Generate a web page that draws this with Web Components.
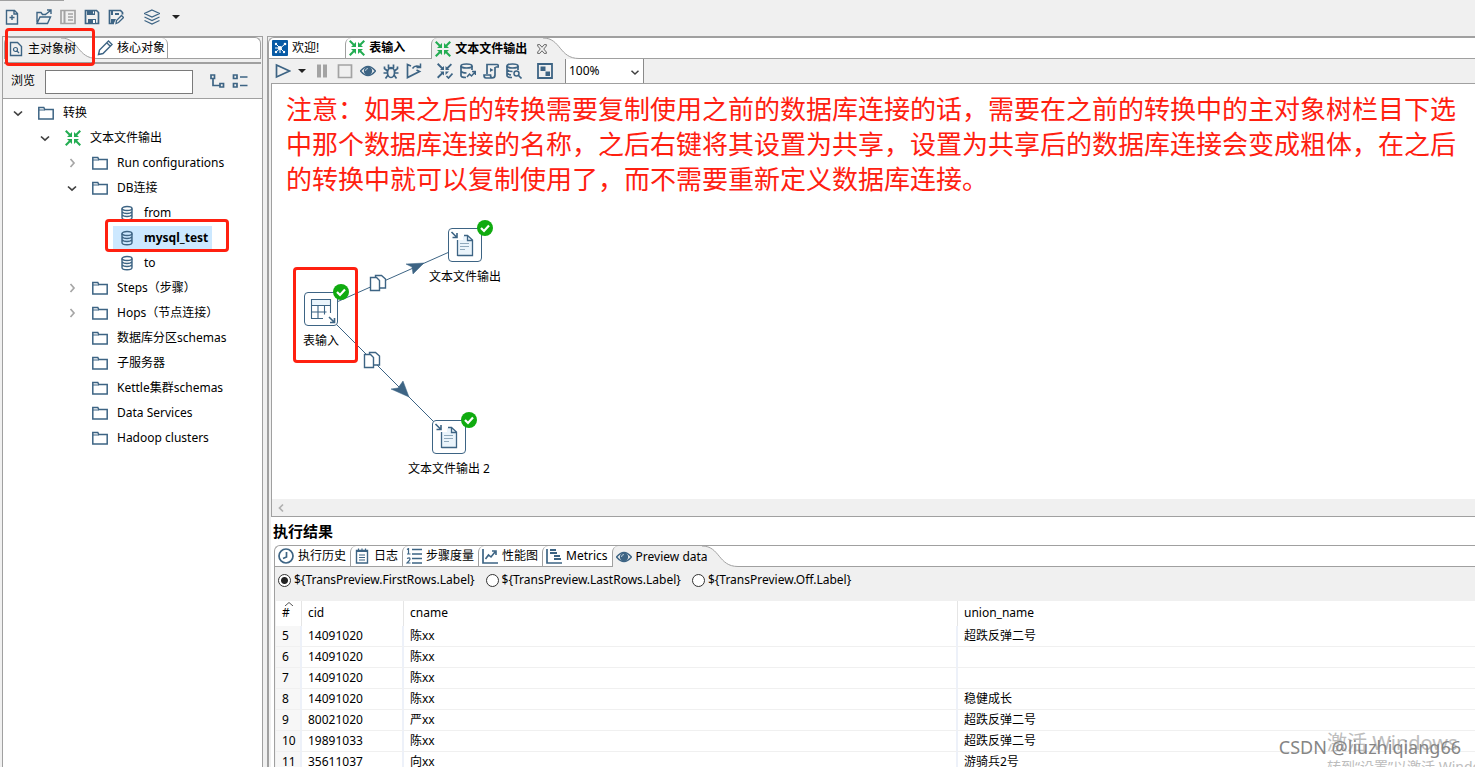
<!DOCTYPE html>
<html lang="zh-CN">
<head>
<meta charset="utf-8">
<title>Spoon - 文本文件输出</title>
<style>
  html, body { margin: 0; height: 100%; overflow: hidden; }
  body {
    --ink: #3d6484; --line: #a0a0a0; --face: #f0f0f0; --mark: #ff2010;
    font: 12px/16px "Noto Sans", "Noto Sans CJK SC", sans-serif;
    color: #000; background: var(--face);
  }
</style>
</head>
<body>
<spoon-app></spoon-app>

<script>
const ICONS = {
  "new": '<path d="M2.500 1.500h8l3 3v10.500h-11z M10 1.500v3.500h3.500" stroke-width="1.400"/><path d="M8 6v5M5.500 8.500h5" stroke-width="1.400"/>',
  open: '<path d="M1 13.500V3.500h4l1.500 2H10M1 14.500l3-6.500h10.500l-3 6.500z" stroke-width="1.400"/><path d="M9.500 5.500l5-4M11 1h4v4" stroke-width="1.400"/>',
  explore: '<g stroke="#a3a3a3"><path d="M1 1.500h14v13H1z"/><path d="M4.500 2v12" stroke-width="2"/><path d="M8 5h5M8 8h5M8 11h5"/></g>',
  save: '<path d="M1.500 1.500h11l2 2v11h-13z"/><path d="M3 2h8v4H3z" fill="currentColor" stroke="none"/><path d="M4 15v-5h8v5z" fill="currentColor" stroke="none"/><path d="M9 11h2v3H9zM9 2.500h1v2H9z" fill="#fff" stroke="none"/>',
  saveas: '<path d="M6 14.500H1.500v-13h11l2 2v2"/><path d="M3 2h2v4H3zM7 4h4v2H7zM3 14v-4h5l-2 4z" fill="currentColor" stroke="none"/><path d="M8 14.500l.5-3 5-5 2 2-5 5z" fill="#f0f0f0" stroke-width="1.300"/>',
  layers: '<path d="M8 1l7.500 3.500L8 8 .5 4.500zM.5 8L8 11.500 15.500 8M.5 11.500L8 15l7.500-3.500" stroke-width="1.200"/>',
  caret: '<path d="M4 6h8l-4 4z" fill="#222" stroke="none"/>',
  docfind: '<path d="M2.500 1.500h7l4 4v9h-11z" stroke-width="1.400"/><circle cx="7.500" cy="8.500" r="2" stroke-width="1.200"/><path d="M9 10l2 2" stroke-width="1.300"/>',
  pencil: '<path d="M1.500 14.500l1-4.500 9-9 3.500 3.500-9 9zM10 3l3 3" stroke-width="1.400"/>',
  hop: '<g fill="#23ad52" stroke="none"><path d="M7 2v5H2l1.800-1.800L0 1.500 1.500 0l3.700 3.700z"/><path d="M9 2v5h5l-1.800-1.800L16 1.500 14.500 0l-3.700 3.700z"/><path d="M7 14V9H2l1.800 1.800L0 14.500 1.500 16l3.700-3.700z"/><path d="M9 14V9h5l-1.800 1.800 3.800 3.700-1.500 1.500-3.700-3.700z"/></g>',
  welcome: '<rect width="16" height="16" rx="1" fill="#075aa5" stroke="none"/><g stroke="#fff" stroke-width="1"><path d="M4 4l8 8M13 4L4 12M8 8V13M3 8h5"/></g><g fill="#fff" stroke="none"><circle cx="8" cy="8" r="2"/><circle cx="13" cy="4" r="1.300"/><circle cx="4" cy="4" r="1.200"/><circle cx="4" cy="12" r="1.200"/><circle cx="12" cy="12" r="1.200"/></g>',
  close: '<path d="M3 3h2.500L8 6l2.500-3H13v1.500L10 8l3 3.500V13h-2.500L8 10l-2.500 3H3v-1.500L6 8 3 4.500z" stroke="#555" stroke-width="1"/>',
  play: '<path d="M1.500 2l13 6-13 6z"/>',
  pause: '<path d="M3 1.500h4v13H3zM9 1.500h4v13H9z" fill="#a3a3a3" stroke="none"/>',
  stop: '<path d="M1.500 2h13v12.500h-13z" stroke="#a3a3a3"/>',
  eye: '<path d="M.5 8Q8-1 15.500 8 8 17 .5 8z" stroke-width="1.500"/><circle cx="8" cy="8" r="4.200" fill="currentColor" stroke="none"/><path d="M8 5.500A2.500 2.500 0 0 0 5.500 8" stroke="#b9cbd8" stroke-width="1"/>',
  bug: '<ellipse cx="8" cy="9.500" rx="3.500" ry="5"/><path d="M5.500 5V1.500M10.500 5V1.500M5 5.500h6M4.500 8L1.500 5.500V3.500M11.500 8l3-2.500V3.500M4.500 10H.5M11.500 10h4M5 12l-2.500 3.500M11 12l2.500 3.500"/>',
  replay: '<path d="M5 3L1.500 1.500v13l12-6-3-1.500"/><path d="M6.500 5.500q2.500-4 8-1.500M14.500.5v4h-4" stroke-width="1.500"/>',
  verify: '<g fill="currentColor" stroke="none"><path d="M7 3v4H3l1.300-1.300L0 1.500 1.300 0l4.200 4.200z"/><path d="M8.500 3v4h4l-1.300-1.300 3.800-4L13.800.5 9.900 4.200z"/><path d="M7 12.500v-4H3l1.300 1.300L0 14l1.300 1.500 4.200-4.200z"/><path d="M8.500 12V8.500h3.500z"/></g><path d="M9.500 13l2 2 4-4.500"/>',
  dbrun: '<ellipse cx="6.500" cy="3" rx="5.500" ry="2"/><path d="M1 3v9.500q0 2 5 2M12 3v4M1 8q1 2 5.500 2"/><path d="M7 14l2.500-3 2 2 3.500-4M12 8.500h3.500V12" stroke-width="1.500"/>',
  script: '<path d="M4 11V1.500h10q1.500 0 1.500 2.500h-3M12 4v8q0 3-3 3H3q-2 0-2-3h6.500q0 3 2 3"/><path d="M7 5l3.500 2L7 9z" fill="currentColor" stroke="none"/>',
  dbfind: '<ellipse cx="6.500" cy="3" rx="5.500" ry="2"/><path d="M1 3v9.500q0 2 5 2M12 3v4M1 6.500q1 2 5.500 2M1 10q1 1.500 4 2"/><circle cx="10.500" cy="10.500" r="2.500" stroke-width="1.500"/><path d="M12.500 12.500l3 3"/>',
  results: '<path d="M1 1h14v14H1z" stroke-width="1.800"/><path d="M3.500 3.500h5v4.500h-5zM8.500 8.500h4.500v4.500H8.500z" fill="currentColor" stroke="none"/>',
  expand: '<path d="M2 2h3.500v3.500H2zM11 10.500h3.500V14H11zM4 6v6.500h7"/>',
  collapse: '<path d="M1.500 2H5v3.500H1.500zM1.500 10.500H5V14H1.500z"/><path d="M8 4h7.500M8 12.500h7.500"/>',
  folder: '<path d="M.8 14V2.500h5l1 2h8.400V14z" stroke-width="1.500"/><path d="M1 5h6" stroke-width="1"/>',
  db: '<g stroke-width="1.400"><ellipse cx="8" cy="3.500" rx="5" ry="2"/><path d="M3 3.500v9q0 2.300 5 2.300t5-2.300v-9M3 6.500q1 2 5 2t5-2M3 9.500q1 2 5 2t5-2"/></g>',
  down: '<path d="M4 6.500l4 3.700 4-3.700" stroke="#404040"/>',
  right: '<path d="M6.500 4l3.500 4-3.500 4" stroke="#a6a6a6"/>',
  left: '<path d="M10 4.500L6.500 8l3.500 3.500" stroke="#b0b0b0"/>',
  clock: '<circle cx="8" cy="8" r="7"/><path d="M8.500 4v5L5 10.500"/>',
  log: '<path d="M2.500 2.500h11v12.500h-11z" stroke-width="1.400"/><path d="M2 2h12v2H2z" fill="currentColor" stroke="none"/><path d="M4.500.5v3M8 .5v3M11.500.5v3M5 7h6M5 9.500h6M5 12h6" stroke-width="1.200"/>',
  steps: '<path d="M6 1.500h10M6 6h10M6 10.500h10M6 15h10" stroke-width="1.300"/><path d="M1 1.500l1.500-1v5M1 6h3.500M1 10.500q3-1.500 3 .5 0 1-3 4h3.500" stroke-width="1.200"/>',
  perf: '<path d="M1 1v14h15"/><path d="M3.500 11l3-4 2.500 2 4-5M10 3h4v4" stroke-width="1.600"/>',
  metrics: '<path d="M1 1v14h15"/><path d="M4 2h6M4 5h7M8 8h6M8 11h7" stroke-width="2"/>',
};
const svg = (name, size = 16) =>
  `<svg width="${size}" height="${size}" viewBox="0 0 16 16" fill="none" stroke="currentColor" stroke-width="1.700" aria-hidden="true">${ICONS[name] || ""}</svg>`;

class Base extends HTMLElement {
  connectedCallback() {
    if (this.shadowRoot) return;
    const t = document.createElement("template");
    t.innerHTML = this.render();
    this.attachShadow({ mode: "open" }).append(t.content.cloneNode(true));
  }
  attr(name, fallback = "") { return this.getAttribute(name) ?? fallback; }
}
const define = (name, render) =>
  customElements.define(name, class extends Base { render() { return render(this); } });

define("ui-icon", el => `
  <style>:host{display:block;flex:none;color:var(--ink);width:${el.attr("size", "16")}px;height:${el.attr("size", "16")}px}svg{display:block}</style>
  ${svg(el.attr("name"), el.attr("size", "16"))}`);

define("tool-button", el => `
  <style>
    :host{display:block;flex:none}
    button{display:flex;align-items:center;justify-content:center;width:23px;height:24px;padding:0;border:0;background:none}
    :host([narrow]) button{width:16px}
    :host([wide]) button{width:24px}
  </style>
  <button type="button" aria-label="${el.attr("label")}"><ui-icon name="${el.attr("icon")}"></ui-icon></button>`);

define("tool-bar", () => `
  <style>
    :host{display:flex;align-items:center;flex:none}
    ::slotted(.gap){width:8px;flex:none}
    ::slotted(.gap.big){width:12px}
  </style><slot></slot>`);

/* A red frame that is drawn over part of its parent */
define("red-frame", () => `
  <style>:host{display:block;position:absolute;z-index:5;box-sizing:border-box;border:3px solid var(--mark);border-radius:4px;pointer-events:none}</style>`);

define("tab-strip", () => `
  <style>
    :host{display:flex;flex:none;height:22px;box-sizing:border-box;border:1px solid var(--line);border-width:1px 0 0 1px;border-radius:6px 0 0 0;overflow:hidden;background:#fff}
    :host([closed]){border-right-width:1px;border-top-right-radius:6px}
    .rest{flex:1;border-bottom:1px solid var(--line)}
  </style><slot></slot><div class="rest"></div>`);

define("tab-item", el => `
  <style>
    :host{display:block;flex:none;position:relative}
    button{font:inherit;color:inherit;display:flex;align-items:center;gap:4px;height:100%;box-sizing:border-box;padding:0 4px 0 3px;border:0;border-bottom:1px solid var(--line);background:none;white-space:nowrap}
    ui-icon,.text,.x{position:relative;z-index:1}
    .x{width:14px;height:14px;margin-left:4px}
    :host([bold]) .text{font-weight:bold}
    :host([divided]) button{border-left:1px solid var(--line);border-top-left-radius:6px}
    :host([ended]) button{border-right:1px solid var(--line);border-top-right-radius:6px;padding:0 2px 0 0}
    :host([active]) button{border:0;padding-right:30px}
    :host([active][divided]) button{padding-left:4px}
    :host([active][tight]) button{padding-right:21px}
    .face{position:absolute;inset:0 36px 0 0;background:var(--face)}
    :host([active][divided]) .face{border-left:1px solid var(--line);border-top-left-radius:6px}
    .curve{position:absolute;right:0;top:0;width:36px;height:100%}
  </style>
  <button type="button" role="tab" aria-selected="${el.hasAttribute("active")}">
    ${el.hasAttribute("active") ? `<span class="face"></span><svg class="curve" viewBox="0 0 36 21" preserveAspectRatio="none"><path d="M0 0C18 0 16 20.500 36 20.500V21H0z" fill="#f0f0f0"/><path d="M0 0C18 0 16 20.500 36 20.500" fill="none" stroke="#a0a0a0"/></svg>` : ""}
    <ui-icon name="${el.attr("icon")}"></ui-icon>
    <span class="text"><slot></slot></span>
    ${el.hasAttribute("closable") ? `<span class="x">${el.hasAttribute("active") ? svg("close", 14) : ""}</span>` : ""}
  </button>`);

define("tree-node", el => `
  <style>
    :host{display:block}
    .row{position:relative;display:flex;align-items:center;height:25px;white-space:nowrap}
    .arrow{margin:0 12px 0 7px}
    .label{display:flex;align-items:center;gap:9px}
    :host([selected]) .label{font-weight:bold;background:#cce8ff;height:24px;margin-left:-6px;padding:0 4px 0 6px}
    .kids{padding-left:27px}
    red-frame{left:21px;top:-6px;width:124px;height:33px}
  </style>
  <div role="treeitem" aria-label="${el.attr("label")}">
    <div class="row">
      <ui-icon class="arrow" name="${el.attr("arrow")}"></ui-icon>
      <span class="label"><ui-icon name="${el.attr("icon", "folder")}"></ui-icon><span>${el.attr("label")}</span></span>
      ${el.hasAttribute("selected") ? "<red-frame></red-frame>" : ""}
    </div>
    <div class="kids" role="group"><slot></slot></div>
  </div>`);

define("object-panel", () => `
  <style>
    :host{display:flex;flex-direction:column;position:relative;box-sizing:border-box;border:1px solid var(--line);border-bottom:0;min-width:0}
    tab-strip{margin:0 1px}
    .band{height:3px;margin:0 1px;border-bottom:2px solid var(--line);flex:none}
    .search{display:flex;align-items:center;height:34px;padding:0 11px 0 8px;border-bottom:1px solid var(--line);flex:none}
    label{margin-right:10px}
    input{width:148px;height:24px;box-sizing:border-box;border:1px solid #7a7a7a;background:#fff;font:inherit;padding:0 4px;margin:2px auto 0 0}
    nav{flex:1;background:#fff;padding-top:1px;overflow:hidden}
    .frame{left:2px;top:-9px;width:90px;height:38px}
  </style>
  <tab-strip closed role="tablist">
    <tab-item icon="docfind" active tight>主对象树</tab-item>
    <tab-item icon="pencil" ended>核心对象</tab-item>
  </tab-strip>
  <div class="band"></div>
  <div class="search">
    <label for="q">浏览</label><input id="q" type="text">
    <tool-button icon="expand" label="展开"></tool-button><tool-button icon="collapse" label="折叠"></tool-button>
  </div>
  <nav role="tree">
    <tree-node arrow="down" label="转换">
      <tree-node arrow="down" icon="hop" label="文本文件输出">
        <tree-node arrow="right" label="Run configurations"></tree-node>
        <tree-node arrow="down" label="DB连接">
          <tree-node icon="db" label="from"></tree-node>
          <tree-node icon="db" label="mysql_test" selected></tree-node>
          <tree-node icon="db" label="to"></tree-node>
        </tree-node>
        <tree-node arrow="right" label="Steps（步骤）"></tree-node>
        <tree-node arrow="right" label="Hops（节点连接）"></tree-node>
        <tree-node label="数据库分区schemas"></tree-node>
        <tree-node label="子服务器"></tree-node>
        <tree-node label="Kettle集群schemas"></tree-node>
        <tree-node label="Data Services"></tree-node>
        <tree-node label="Hadoop clusters"></tree-node>
      </tree-node>
    </tree-node>
  </nav>
  <red-frame class="frame"></red-frame>`);

/* A step on the canvas; x and y are the top left corner of its box */
define("flow-step", el => `
  <style>
    :host{position:absolute;left:${el.attr("x")}px;top:${el.attr("y")}px;width:34px;display:flex;flex-direction:column;align-items:center;gap:7px;white-space:nowrap}
    svg{display:block;overflow:visible}
  </style>
  <svg width="34" height="34" viewBox="0 0 34 34" fill="none" stroke="#3d6484" aria-hidden="true">
    <rect x=".5" y=".5" width="33" height="33" rx="3.500" fill="#fff"/>
    ${el.attr("kind") === "input"
      ? `<path d="M8 8h18v5H8z" fill="#eaf4fb" stroke="none"/><path d="M26.500 21V7.500h-19v19H19M7.500 13.500h19M7.500 20h15M14 13.500v13M20.500 13.500v9" stroke-width="1.100"/>
         <path d="M25 25l5 5M30.500 26v4.500H26" stroke-width="1.600"/>`
      : `<path d="M10 12h5V8h5l4 4v15H10z" fill="#eaf4fb" stroke="none"/><path d="M9.500 27.500h15V12l-5-4.500H16M19.500 8v4.500h5M9.500 28V12" stroke-width="1.300"/><path d="M12 15.500h9M12 18.500h9M12 21.500h5" stroke="#8fa9bc"/>
         <path d="M3.500 4l5 5M9 5v4.500H4.500" stroke-width="1.600"/>`}
    <circle cx="37" cy="0" r="8" fill="#10ab10" stroke="none"/><path d="M33 0l3 3 5-5.500" stroke="#fff" stroke-width="2.200"/>
  </svg>
  <span><slot></slot></span>`);

define("flow-canvas", () => `
  <style>
    :host{display:flex;flex-direction:column;flex:none;box-sizing:border-box;height:434px;border:1px solid var(--line);border-right:0;background:#fff}
    .sheet{position:relative;flex:1;overflow:hidden}
    p{margin:0;padding:8px 14px;font-size:26px;line-height:35px;color:var(--mark);white-space:nowrap}
    .hops{position:absolute;left:0;top:0}
    .frame{left:21px;top:183px;width:65px;height:96px}
    .scroll{height:17px;background:var(--face);display:flex;align-items:center;padding-left:1px;flex:none}
  </style>
  <div class="sheet">
    <p>注意：如果之后的转换需要复制使用之前的数据库连接的话，需要在之前的转换中的主对象树栏目下选<br>中那个数据库连接的名称，之后右键将其设置为共享，设置为共享后的数据库连接会变成粗体，在之后<br>的转换中就可以复制使用了，而不需要重新定义数据库连接。</p>
    <svg class="hops" width="260" height="410" fill="none" stroke="#3d6484" aria-hidden="true">
      <path d="M49 225L193 161M49 225L177 353"/>
      <path d="M152 179l-18 1 6 3 1 7zM137 313l-6-16-5 7-7 1z" fill="#3d6484" stroke-width=".5"/>
      <g fill="#fff" stroke-width="1.400"><path d="M103.500 191.500h6l4 3.500v9h-10z"/><path d="M98.500 193.500h6l3 3v10h-9z"/>
      <path d="M97.500 268.500h6l4 3.500v9h-10z"/><path d="M92.500 270.500h6l3 3v10h-9z"/></g>
    </svg>
    <flow-step kind="input" x="32" y="208">表输入</flow-step>
    <flow-step kind="output" x="176" y="144">文本文件输出</flow-step>
    <flow-step kind="output" x="160" y="336">文本文件输出 2</flow-step>
    <red-frame class="frame"></red-frame>
  </div>
  <div class="scroll"><ui-icon name="left"></ui-icon></div>`);

define("zoom-select", () => `
  <style>
    :host{display:block;position:relative;width:79px;height:24px;margin-left:9px}
    select{appearance:none;width:100%;height:100%;box-sizing:border-box;margin:0;border:1px solid #8a8a8a;border-width:0 1px;border-radius:0;background:#fff;font:inherit;color:#000;padding:0 3px}
    ui-icon{position:absolute;right:2px;top:6px;pointer-events:none}
  </style>
  <select aria-label="缩放"><option>100%</option><option>75%</option><option>50%</option></select>
  <ui-icon name="down" size="14"></ui-icon>`);

define("radio-choice", el => `
  <style>
    :host{display:block}
    label{display:flex;align-items:center;gap:3px}
    input{appearance:none;margin:0;width:13px;height:13px;box-sizing:border-box;border:1px solid #333;border-radius:50%;background:#fff}
    input:checked{background:radial-gradient(circle,#222 0 3px,#fff 4px)}
  </style>
  <label><input type="radio" name="rows" ${el.hasAttribute("checked") ? "checked" : ""}><slot></slot></label>`);

const ROWS = [
  ["5", "14091020", "陈xx", "超跌反弹二号"], ["6", "14091020", "陈xx", ""], ["7", "14091020", "陈xx", ""],
  ["8", "14091020", "陈xx", "稳健成长"], ["9", "80021020", "严xx", "超跌反弹二号"],
  ["10", "19891033", "陈xx", "超跌反弹二号"], ["11", "35611037", "向xx", "游骑兵2号"],
];
define("data-grid", () => `
  <style>
    :host{display:block;background:#fff;overflow:hidden}
    table{width:100%;table-layout:fixed;border-collapse:separate;border-spacing:0}
    .n{width:26px}.id{width:102px}.name{width:554px}
    th,td{box-sizing:border-box;padding:0 0 0 6px;text-align:left;font-weight:normal;white-space:nowrap;border-right:1px solid #e5e5e5}
    th{height:25px;padding-bottom:1px;position:relative}
    td{height:21px;border-bottom:1px solid #f0f0f0;border-right:2px solid #edf1f9}
    th:last-child,td:last-child{border-right:0}
    td:first-child{background:#f7f7f7}
    th svg{position:absolute;left:9px;top:1px}
  </style>
  <table>
    <colgroup><col class="n"><col class="id"><col class="name"><col></colgroup>
    <thead><tr><th>#<svg width="8" height="4" fill="none" stroke="#555"><path d="M0 4l4-3.500L8 4"/></svg></th><th>cid</th><th>cname</th><th>union_name</th></tr></thead>
    <tbody>${ROWS.map(r => `<tr>${r.map(c => `<td>${c}</td>`).join("")}</tr>`).join("")}</tbody>
  </table>`);

define("result-panel", () => `
  <style>
    :host{display:flex;flex-direction:column;flex:1;min-height:0;background:#fff}
    h2{margin:0;font-size:15px;line-height:28px;padding-left:2px}
    .box{margin-left:3px;display:flex;flex-direction:column;flex:1;min-height:0}
    .body{border-left:1px solid var(--line);background:var(--face);flex:1;padding-left:1px;min-height:0}
    .choices{display:flex;gap:11px;padding:5px 2px 13px}
  </style>
  <h2>执行结果</h2>
  <div class="box">
    <tab-strip role="tablist">
      <tab-item icon="clock">执行历史</tab-item>
      <tab-item icon="log" divided>日志</tab-item>
      <tab-item icon="steps" divided>步骤度量</tab-item>
      <tab-item icon="perf" divided>性能图</tab-item>
      <tab-item icon="metrics" divided>Metrics</tab-item>
      <tab-item icon="eye" divided active>Preview data</tab-item>
    </tab-strip>
    <div class="body">
      <div class="choices">
        <radio-choice checked>\${TransPreview.FirstRows.Label}</radio-choice>
        <radio-choice>\${TransPreview.LastRows.Label}</radio-choice>
        <radio-choice>\${TransPreview.Off.Label}</radio-choice>
      </div>
      <data-grid></data-grid>
    </div>
  </div>`);

define("editor-panel", () => `
  <style>
    :host{display:flex;flex-direction:column;box-sizing:border-box;border:1px solid var(--line);border-width:1px 0 0 1px;min-width:0;min-height:0}
    .in{display:flex;flex-direction:column;flex:1;min-height:0;border-left:1px solid var(--line);padding-left:2px}
  </style>
  <tab-strip role="tablist">
    <tab-item icon="welcome" closable>欢迎!</tab-item>
    <tab-item icon="hop" closable divided bold>表输入</tab-item>
    <tab-item icon="hop" closable divided bold active>文本文件输出</tab-item>
  </tab-strip>
  <div class="in">
    <tool-bar>
      <tool-button icon="play" label="运行"></tool-button><tool-button narrow icon="caret" label="运行选项"></tool-button>
      <tool-button icon="pause" label="暂停"></tool-button><tool-button icon="stop" label="停止"></tool-button>
      <tool-button icon="eye" label="预览"></tool-button><tool-button icon="bug" label="调试"></tool-button>
      <tool-button icon="replay" label="重放"></tool-button><span class="gap"></span>
      <tool-button icon="verify" label="校验"></tool-button><tool-button icon="dbrun" label="影响分析"></tool-button>
      <tool-button icon="script" label="SQL"></tool-button><tool-button icon="dbfind" label="浏览数据库"></tool-button><span class="gap"></span>
      <tool-button icon="results" label="显示结果"></tool-button><zoom-select></zoom-select>
    </tool-bar>
    <flow-canvas></flow-canvas>
    <result-panel></result-panel>
  </div>`);

define("corner-notes", () => `
  <style>
    :host{position:absolute;right:0;bottom:0;width:200px;height:38px;overflow:hidden;pointer-events:none;white-space:nowrap}
    .os{position:absolute;left:52px;top:0;color:#bdbdbd}
    .big{font-size:20px;line-height:28px}.small{font-size:14px;line-height:20px}
    .by{position:absolute;right:14px;top:6px;font-size:18px;line-height:24px;color:#858585}
  </style>
  <div class="os"><div class="big">激活 Windows</div><div class="small">转到“设置”以激活 Windows。</div></div>
  <div class="by">CSDN @liuzhiqiang66</div>`);

define("spoon-app", () => `
  <style>
    :host{display:flex;flex-direction:column;height:100vh;position:relative;overflow:hidden}
    .top{height:36px;flex:none;box-sizing:border-box;padding:5px 0 0}
    .edge{position:absolute;left:0;top:0;width:64px;height:1px;background:var(--line)}
    .top tool-bar{height:24px}
    main{display:grid;grid-template-columns:261px minmax(0,1fr);gap:4px;flex:1;min-height:0;padding-left:2px}
  </style>
  <header class="top">
    <div class="edge"></div>
    <tool-bar>
      <tool-button wide icon="new" label="新建"></tool-button><span class="gap"></span>
      <tool-button wide icon="open" label="打开"></tool-button><tool-button wide icon="explore" label="浏览资源库"></tool-button>
      <tool-button wide icon="save" label="保存"></tool-button><tool-button wide icon="saveas" label="另存为"></tool-button>
      <span class="gap big"></span><tool-button wide icon="layers" label="透视图"></tool-button><tool-button wide icon="caret" label="透视图选项"></tool-button>
    </tool-bar>
  </header>
  <main><object-panel></object-panel><editor-panel></editor-panel></main>
  <corner-notes></corner-notes>`);
</script>
</body>
</html>
